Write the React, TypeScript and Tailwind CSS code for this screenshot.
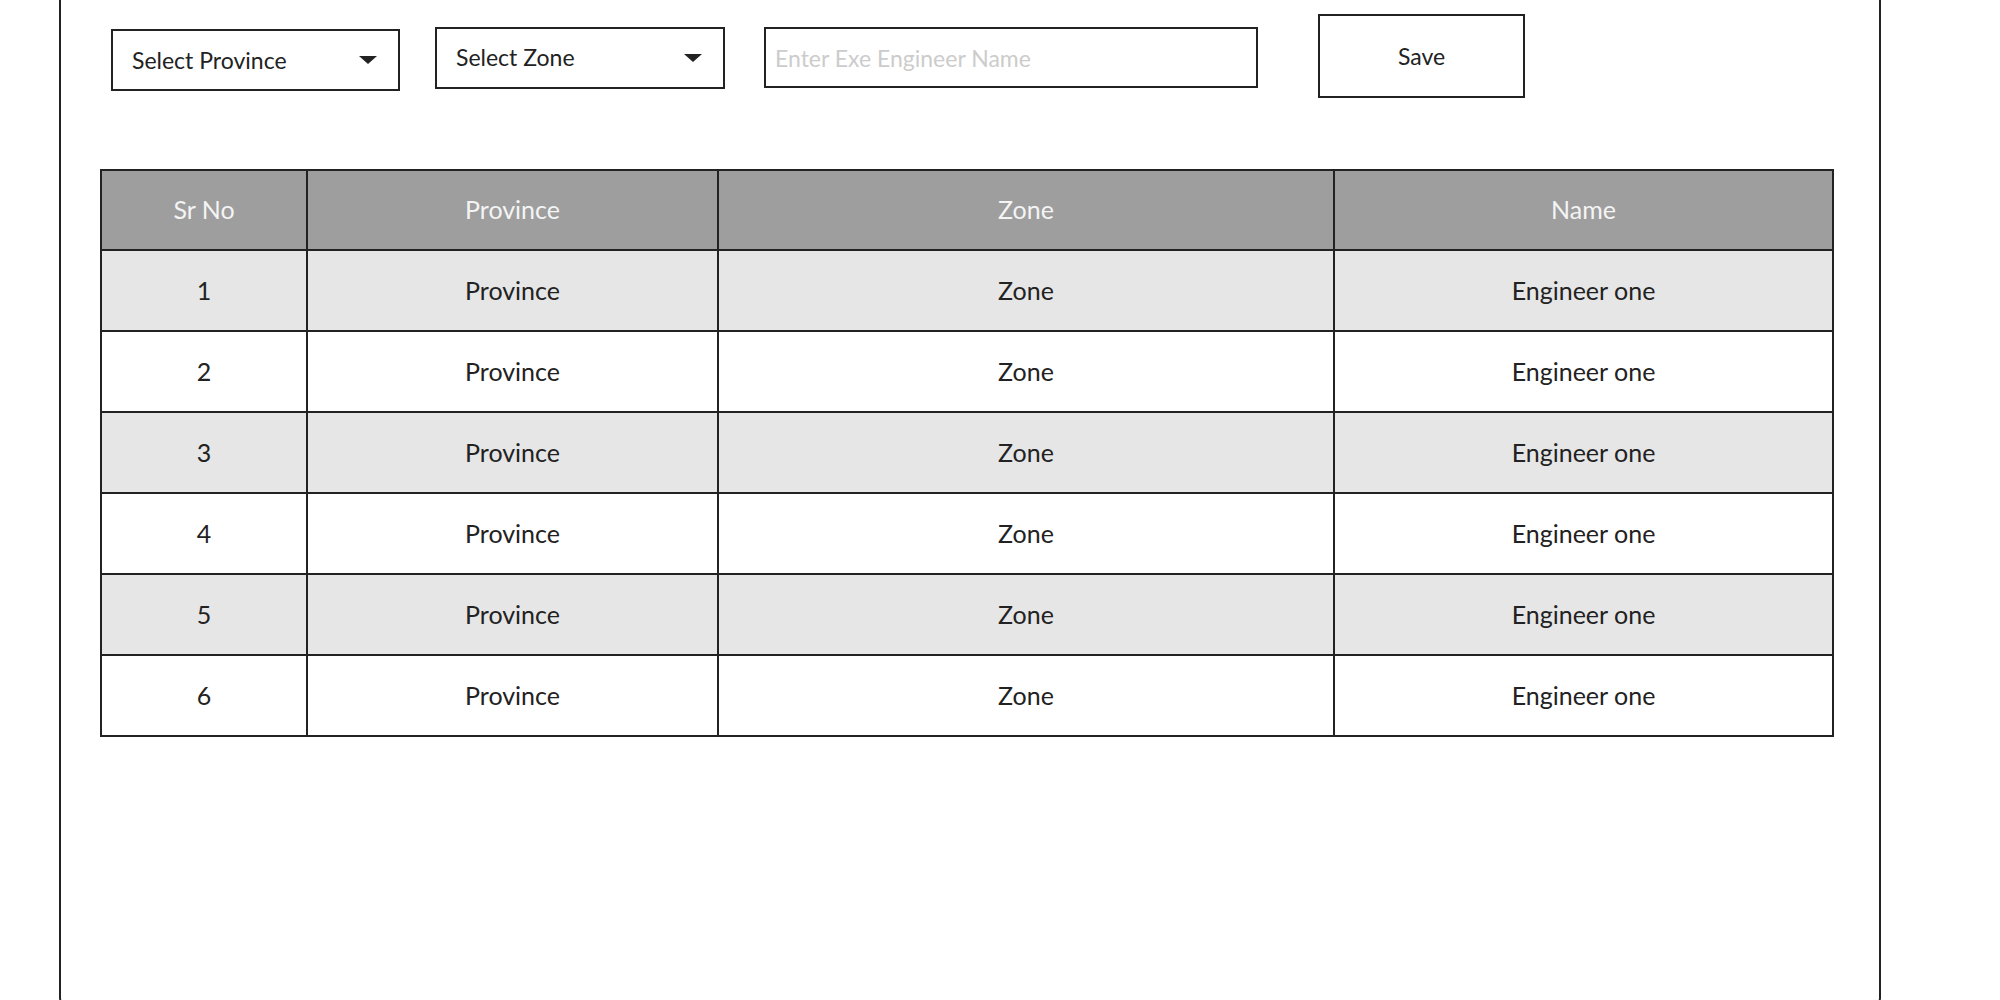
import React from 'react';

const rows = [1, 2, 3, 4, 5, 6].map(n => ({ id: n, province: 'Province', zone: 'Zone', name: 'Engineer one' }));

const Caret: React.FC = () => (
  <svg width="18" height="8" viewBox="0 0 18 8" className="shrink-0">
    <path d="M0 0 H18 L9 8 Z" fill="#222" />
  </svg>
);

const App: React.FC = () => {
  return (
    <div className="w-[2000px] h-[1000px] bg-white overflow-hidden font-['Lato',sans-serif] text-[#222]">
      <div className="ml-[59px] w-[1822px] h-[1004px] border-x-2 border-b-2 border-[#222] rounded-b-md">
        {/* filters row */}
        <div className="flex items-start h-[99px] pl-[50px]">
          <div className="mt-[29px] w-[289px] h-[62px] border-2 border-[#222] flex items-center justify-between pl-[19px] pr-[21px] text-[23px]">
            <span>Select Province</span>
            <Caret />
          </div>
          <div className="ml-[35px] mt-[27px] w-[290px] h-[62px] border-2 border-[#222] flex items-center justify-between pl-[19px] pr-[21px] text-[23px]">
            <span className="-mt-[2px]">Select Zone</span>
            <Caret />
          </div>
          <input
            className="ml-[39px] mt-[27px] w-[494px] h-[61px] border-2 border-[#222] px-[9px] text-[23px] placeholder:text-[#cccccc] outline-none"
            placeholder="Enter Exe Engineer Name"
          />
          <button className="ml-[60px] mt-[14px] w-[207px] h-[84px] border-2 border-[#222] text-[23px] bg-white">
            Save
          </button>
        </div>

        <table className="ml-[39px] mt-[70px] w-[1732px] border-collapse table-fixed text-[25px]">
          <colgroup>
            <col className="w-[206px]" />
            <col className="w-[411px]" />
            <col className="w-[616px]" />
            <col className="w-[499px]" />
          </colgroup>
          <thead>
            <tr className="bg-[#9e9e9e] text-[#f4f4f4] h-[80px]">
              <th className="border-2 border-[#222] font-normal">Sr No</th>
              <th className="border-2 border-[#222] font-normal">Province</th>
              <th className="border-2 border-[#222] font-normal">Zone</th>
              <th className="border-2 border-[#222] font-normal">Name</th>
            </tr>
          </thead>
          <tbody>
            {rows.map(r => (
              <tr key={r.id} className={r.id % 2 === 1 ? 'bg-[#e6e6e6] h-[81px]' : 'bg-white h-[81px]'}>
                <td className="border-2 border-[#222] text-center">{r.id}</td>
                <td className="border-2 border-[#222] text-center">{r.province}</td>
                <td className="border-2 border-[#222] text-center">{r.zone}</td>
                <td className="border-2 border-[#222] text-center">{r.name}</td>
              </tr>
            ))}
          </tbody>
        </table>
      </div>
    </div>
  );
};

export default App;
